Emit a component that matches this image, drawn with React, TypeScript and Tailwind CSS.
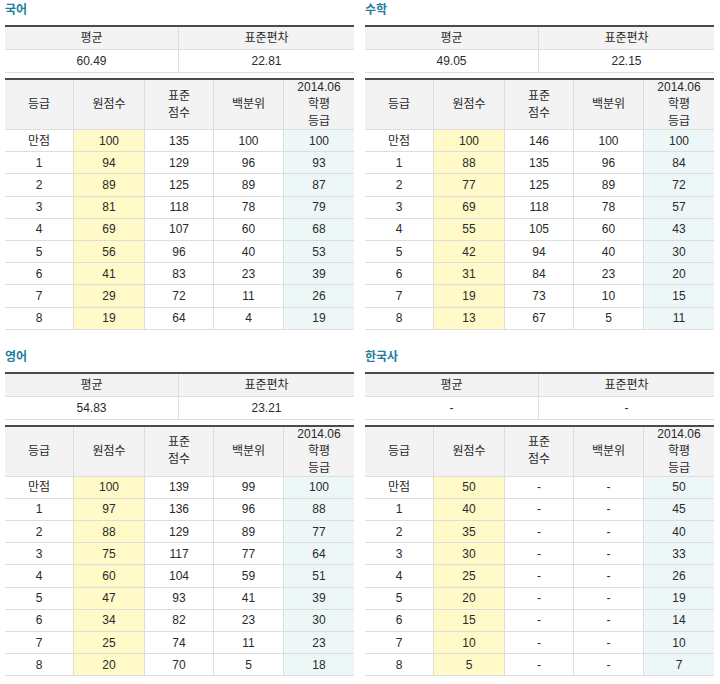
import React from "react";

type Row = [string, string, string, string, string];
type Subject = { name: string; avg: string; sd: string; rows: Row[] };

const subjects: Subject[] = [
  {
    name: "국어",
    avg: "60.49",
    sd: "22.81",
    rows: [
      ["만점", "100", "135", "100", "100"],
      ["1", "94", "129", "96", "93"],
      ["2", "89", "125", "89", "87"],
      ["3", "81", "118", "78", "79"],
      ["4", "69", "107", "60", "68"],
      ["5", "56", "96", "40", "53"],
      ["6", "41", "83", "23", "39"],
      ["7", "29", "72", "11", "26"],
      ["8", "19", "64", "4", "19"],
    ],
  },
  {
    name: "수학",
    avg: "49.05",
    sd: "22.15",
    rows: [
      ["만점", "100", "146", "100", "100"],
      ["1", "88", "135", "96", "84"],
      ["2", "77", "125", "89", "72"],
      ["3", "69", "118", "78", "57"],
      ["4", "55", "105", "60", "43"],
      ["5", "42", "94", "40", "30"],
      ["6", "31", "84", "23", "20"],
      ["7", "19", "73", "10", "15"],
      ["8", "13", "67", "5", "11"],
    ],
  },
  {
    name: "영어",
    avg: "54.83",
    sd: "23.21",
    rows: [
      ["만점", "100", "139", "99", "100"],
      ["1", "97", "136", "96", "88"],
      ["2", "88", "129", "89", "77"],
      ["3", "75", "117", "77", "64"],
      ["4", "60", "104", "59", "51"],
      ["5", "47", "93", "41", "39"],
      ["6", "34", "82", "23", "30"],
      ["7", "25", "74", "11", "23"],
      ["8", "20", "70", "5", "18"],
    ],
  },
  {
    name: "한국사",
    avg: "-",
    sd: "-",
    rows: [
      ["만점", "50", "-", "-", "50"],
      ["1", "40", "-", "-", "45"],
      ["2", "35", "-", "-", "40"],
      ["3", "30", "-", "-", "33"],
      ["4", "25", "-", "-", "26"],
      ["5", "20", "-", "-", "19"],
      ["6", "15", "-", "-", "14"],
      ["7", "10", "-", "-", "10"],
      ["8", "5", "-", "-", "7"],
    ],
  },
];

const colBg = ["bg-white", "bg-[#fffac8]", "bg-white", "bg-white", "bg-[#eef7f8]"];
const colBorder = ["border-r", "border-r", "border-r", "border-r", ""];

function Head({ lines, last }: { lines: string[]; last?: boolean }) {
  return (
    <div
      className={`flex h-[50px] flex-col items-center justify-center border-b border-[#dddddd] bg-[#f3f3f3] text-center leading-[17px] ${
        last ? "" : "border-r"
      }`}
    >
      {lines.map((l) => (
        <span key={l} className="block">
          {l}
        </span>
      ))}
    </div>
  );
}

function Panel({ s }: { s: Subject }) {
  return (
    <div className="w-[349px]">
      <div className="h-[25px] pt-[3px] text-[12px] font-bold leading-[14px] text-[#1f7d9e]">{s.name}</div>
      <div className="grid grid-cols-[174px_175px] border-t-2 border-[#4a4a4a]">
        <div className="flex h-[23px] items-center justify-center border-b border-r border-[#dddddd] bg-[#f3f3f3]">평균</div>
        <div className="flex h-[23px] items-center justify-center border-b border-[#dddddd] bg-[#f3f3f3]">표준편차</div>
        <div className="flex h-[23px] items-center justify-center border-b border-r border-[#dddddd]">{s.avg}</div>
        <div className="flex h-[23px] items-center justify-center border-b border-[#dddddd]">{s.sd}</div>
      </div>
      <div className="mt-[5px] grid grid-cols-[69px_71px_69px_70px_70px] border-t-2 border-[#4a4a4a]">
        <Head lines={["등급"]} />
        <Head lines={["원점수"]} />
        <Head lines={["표준", "점수"]} />
        <Head lines={["백분위"]} />
        <Head lines={["2014.06", "학평", "등급"]} last />
        {s.rows.map((r, i) =>
          r.map((c, j) => (
            <div
              key={`${i}-${j}`}
              className={`flex h-[22.2px] items-center justify-center border-b border-[#dddddd] ${colBorder[j]} ${colBg[j]}`}
            >
              {c}
            </div>
          ))
        )}
      </div>
    </div>
  );
}

export default function App() {
  return (
    <div
      className="w-[720px] h-[684px] bg-white pl-[5px] text-[12px] text-[#2a2a2a]"
      style={{ fontFamily: '"Liberation Sans", "Noto Sans CJK KR", sans-serif' }}
    >
      <div className="flex gap-[11px]">
        <Panel s={subjects[0]} />
        <Panel s={subjects[1]} />
      </div>
      <div className="mt-[17px] flex gap-[11px]">
        <Panel s={subjects[2]} />
        <Panel s={subjects[3]} />
      </div>
    </div>
  );
}
